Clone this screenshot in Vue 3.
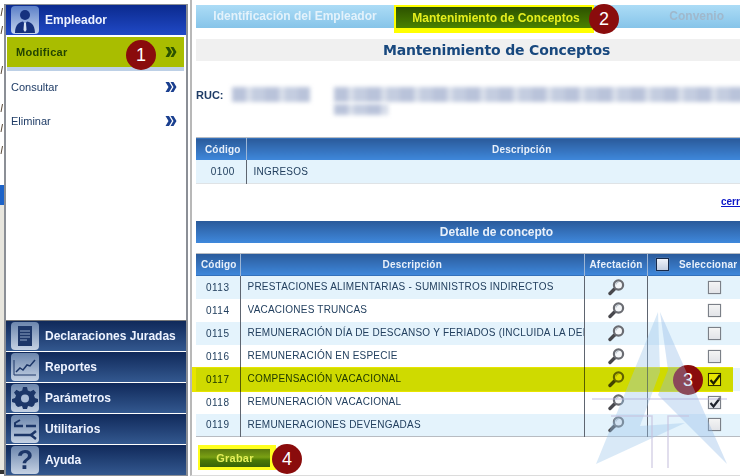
<script setup>
// Menu lateral y detalle de conceptos del empleador
const opciones = [
  { id: 'mod', texto: 'Modificar', activa: true },
  { id: 'con', texto: 'Consultar' },
  { id: 'eli', texto: 'Eliminar' },
]

const secciones = [
  { id: 'dec', texto: 'Declaraciones Juradas' },
  { id: 'rep', texto: 'Reportes' },
  { id: 'par', texto: 'Parámetros' },
  { id: 'uti', texto: 'Utilitarios' },
  { id: 'ayu', texto: 'Ayuda' },
]

const conceptos = [
  { codigo: '0113', desc: 'PRESTACIONES ALIMENTARIAS - SUMINISTROS INDIRECTOS' },
  { codigo: '0114', desc: 'VACACIONES TRUNCAS' },
  { codigo: '0115', desc: 'REMUNERACIÓN DÍA DE DESCANSO Y FERIADOS (INCLUIDA LA DEL 1° DE MAYO)' },
  { codigo: '0116', desc: 'REMUNERACIÓN EN ESPECIE' },
  { codigo: '0117', desc: 'COMPENSACIÓN VACACIONAL', marcado: true, amarilla: true },
  { codigo: '0118', desc: 'REMUNERACIÓN VACACIONAL', marcado: true },
  { codigo: '0119', desc: 'REMUNERACIONES DEVENGADAS' },
]

// restos de la ventana de atras
const restos = [12, 30, 70, 108, 128, 150]
</script>

<template>
  <div class="pagina">
    <svg class="resto-izq" viewBox="0 0 4 476" width="4" height="476">
      <path v-for="y in restos" :key="y" :d="`M2.500 ${y - 4} L1 ${y + 4}`" stroke="#5a4a3a" stroke-width="1" />
      <rect x="0" y="185" width="4" height="20" fill="#1d63c8" />
      <rect x="0" y="205" width="4" height="265" fill="#e8e6de" />
      <rect x="0" y="470" width="4" height="4" fill="#333" />
    </svg>

    <aside class="lateral">
      <div class="cab-menu">
        <span class="mosaico azul">
          <svg viewBox="0 0 28 28" width="28" height="28">
            <circle cx="14" cy="9" r="5" fill="#16317e" />
            <path d="M4 27 C4 18 9 16 12 15.500 L14 18 L16 15.500 C19 16 24 18 24 27 Z" fill="#16317e" />
            <path d="M13 17 H15 L15.500 24 L14 26 L12.500 24 Z" fill="#d7e2f2" />
          </svg>
        </span>
        Empleador
      </div>

      <div class="opciones">
        <div v-for="o in opciones" :key="o.id" class="opcion" :class="{ activa: o.activa }">
          <span>{{ o.texto }}</span>
          <svg viewBox="0 0 12 12" width="12" height="12">
            <path d="M0.500 1 H4 L7 6 L4 11 H0.500 L3.500 6 Z M5.500 1 H8.500 L11.500 6 L8.500 11 H5.500 L8.500 6 Z" />
          </svg>
        </div>
      </div>

      <div v-for="s in secciones" :key="s.id" class="seccion">
        <span class="mosaico">
          <svg v-if="s.id === 'dec'" viewBox="0 0 28 28" width="28" height="28">
            <rect x="7" y="4" width="14" height="20" fill="#1c3668" />
            <path d="M9 9 H19 M9 12 H19 M9 15 H19 M9 18 H16" stroke="#8fa5c6" stroke-width="1.200" />
          </svg>
          <svg v-else-if="s.id === 'rep'" viewBox="0 0 28 28" width="28" height="28">
            <path d="M3 7 V22 H25" fill="none" stroke="#1c3668" />
            <path d="M5 19 L9 15 L12 17 L16 12 L19 13 L24 7" fill="none" stroke="#1c3668" stroke-width="1.500" />
          </svg>
          <svg v-else-if="s.id === 'par'" viewBox="0 0 28 28" width="28" height="28">
            <path d="M12 4 H16 L16.800 7.500 L19.500 8.600 L22.500 6.800 L25 9.500 L23 12.500 L24 15 L27 16 V19 L24 20 L23 22.500 L21 24 L17 23 L16 26 H12 L11 23 L7 24 L5 22.500 L4 20 L1 19 V16 L4 15 L5 12.500 L3 9.500 L5.500 6.800 L8.500 8.600 L11.200 7.500 Z" fill="#1c3668" transform="translate(0 -1)" />
            <circle cx="14" cy="14.500" r="4" fill="#a9bbd6" />
          </svg>
          <svg v-else-if="s.id === 'uti'" viewBox="0 0 28 28" width="28" height="28">
            <path d="M3 11 H12 M15 11 H25 M3 20 H20" stroke="#1c3668" stroke-width="2.400" />
            <path d="M9 5 L4 8 V11" fill="none" stroke="#1c3668" stroke-width="2" />
            <path d="M20 20 L25 16 M20 20 L25 24" stroke="#1c3668" stroke-width="2.500" />
          </svg>
          <span v-else class="interroga">?</span>
        </span>
        {{ s.texto }}
      </div>
    </aside>

    <main class="contenido">
      <nav class="pestanas">
        <div class="pestana primera">Identificación del Empleador</div>
        <div class="pestana actual"><span>Mantenimiento de Conceptos</span></div>
        <div class="pestana apagada">Convenio</div>
      </nav>

      <h1 class="titulo">Mantenimiento de Conceptos</h1>

      <div class="ruc">
        <strong>RUC:</strong>
        <div class="borroso corto"></div>
        <div class="bloque-nombre">
          <div class="borroso largo"></div>
          <div class="borroso linea2"></div>
        </div>
      </div>

      <table class="tabla tabla-cab">
        <thead>
          <tr>
            <th class="col-a">Código</th>
            <th>Descripción</th>
          </tr>
        </thead>
        <tbody>
          <tr class="par">
            <td class="centro cod-a">0100</td>
            <td>INGRESOS</td>
          </tr>
        </tbody>
      </table>

      <div class="cerrar"><a href="#">cerrar</a></div>

      <div class="banda">Detalle de concepto</div>

      <table class="tabla tabla-det">
        <thead>
          <tr>
            <th class="col-cod">Código</th>
            <th class="col-desc">Descripción</th>
            <th class="col-afe">Afectación</th>
            <th class="col-sel">
              <div class="sel-cab"><span class="caja cab"></span>Seleccionar</div>
            </th>
          </tr>
        </thead>
        <tbody>
          <tr v-for="(c, i) in conceptos" :key="c.codigo" :class="{ par: i % 2 === 0 }">
            <td class="centro">{{ c.codigo }}</td>
            <td class="desc"><div class="recorte">{{ c.desc }}</div></td>
            <td class="centro">
              <svg class="lupa" viewBox="0 0 17 17" width="17" height="17">
                <path d="M6.500 10 L2 14.500" stroke="#48484d" stroke-width="3.400" stroke-linecap="round" />
                <circle cx="10.500" cy="6" r="4.600" fill="#f4f6f8" stroke="#6a6c72" stroke-width="2.200" />
                <path d="M7.800 5.500 A3 3 0 0 1 10.500 3.200" fill="none" stroke="#bcc5cc" stroke-width="1.200" />
              </svg>
            </td>
            <td class="centro">
              <span class="caja" :class="{ amarilla: c.amarilla }">
                <svg v-if="c.marcado" viewBox="0 0 14 14" width="14" height="14">
                  <path d="M2.500 7 L5.500 10.500 L12 2" fill="none" stroke="#20242c" stroke-width="2.200" />
                </svg>
              </span>
            </td>
          </tr>
        </tbody>
      </table>

      <div class="acciones">
        <button class="grabar" type="button">Grabar</button>
      </div>
    </main>

    <!-- Anotaciones encima de la captura -->
    <div class="resalte"></div>
    <span class="num uno">1</span>
    <span class="num dos">2</span>
    <span class="num tres">3</span>
    <span class="num cuatro">4</span>

    <svg class="marca" viewBox="0 0 740 476" width="740" height="476">
      <polygon points="658,312 596,464 685,423 640,426 660,372" fill="#9cc4ea" opacity="0.38" />
      <polygon points="660,312 727,464 658,395 668,370" fill="#8cb8e6" opacity="0.36" />
      <path d="M592 399 H727" stroke="#b9b6dc" stroke-width="1.500" opacity="0.6" />
      <path d="M611 416 H652 V468 M689 416 H668 V468" fill="none" stroke="#c4c0dc" stroke-width="1.500" opacity="0.7" />
    </svg>
  </div>
</template>

<style scoped>
.pagina {
  position: relative;
  display: flex;
  width: 740px;
  height: 476px;
  overflow: hidden;
  background: #fff;
  font-family: "Liberation Sans", Arial, sans-serif;
}

.resto-izq {
  flex: none;
  display: block;
}

/* Menu lateral */
.lateral {
  width: 184px;
  flex: none;
  display: flex;
  flex-direction: column;
  height: 472px;
  margin-top: 4px;
  border: 1px solid #8b8f96;
  border-left-width: 2px;
  border-right-width: 2px;
  box-sizing: border-box;
}

.cab-menu {
  display: flex;
  align-items: center;
  gap: 6px;
  height: 30px;
  padding-left: 5px;
  flex: none;
  background: linear-gradient(#0b2a8e, #2049c6);
  color: #eef3ff;
  font-size: 12px;
  font-weight: bold;
  border-bottom: 1px solid #fff;
}

.mosaico {
  width: 28px;
  height: 28px;
  flex: none;
  display: flex;
  align-items: center;
  justify-content: center;
  border-radius: 4px;
  background: linear-gradient(#6c86ad, #c5d2e4);
  overflow: hidden;
}

.mosaico.azul {
  background: linear-gradient(#5b7fc8, #c6d5ee);
}

.interroga {
  font: bold 27px "Liberation Sans", sans-serif;
  color: #1c3668;
}

.opciones {
  flex: 1;
  background: #fff;
}

.opcion {
  display: flex;
  align-items: center;
  justify-content: space-between;
  height: 34px;
  padding: 0 9px 0 5px;
  font-size: 11px;
  color: #1f3c66;
}

.opcion svg {
  fill: #1a3f8f;
}

.opcion.activa {
  height: 30px;
  margin: 1px 2px 3px 1px;
  padding: 0 7px 0 9px;
  background: #a9bd00;
  box-shadow: 0 4px #bdd0e6;
  font-weight: bold;
  color: #234400;
}

.opcion.activa span {
  letter-spacing: 0.3px;
}

.opcion.activa svg {
  fill: #2a5200;
}

.seccion {
  display: flex;
  align-items: center;
  gap: 6px;
  height: 30px;
  padding-left: 5px;
  flex: none;
  background: linear-gradient(#10295a, #33588f);
  border-top: 1px solid #fff;
  color: #eef3ff;
  font-size: 12px;
  font-weight: bold;
}

.seccion:nth-child(3) {
  border-top: 1px solid #777;
}

/* Contenido: mas ancho que la ventana, se corta a la derecha */
.contenido {
  flex: none;
  width: 607px;
  height: 476px;
  box-sizing: border-box;
  margin-left: 2px;
  padding: 5px 0 0 4px;
  border-left: 2px solid #b8b8b8;
  border-bottom: 1px solid #dcdcdc;
}

.pestanas {
  display: flex;
  height: 23px;
  background: linear-gradient(#acdcf6, #86c4e9);
}

.pestana {
  display: flex;
  align-items: center;
  justify-content: center;
  font-size: 12px;
  font-weight: bold;
  color: #e3f2fb;
  margin-top: -2px;
}

.pestana.primera {
  width: 198px;
  flex: none;
}

.pestana.actual {
  width: 200px;
  flex: none;
  height: 28px;
  margin-top: 0;
  padding-left: 4px;
  box-sizing: border-box;
  border: 2px solid #ffff00;
  border-bottom-width: 5px;
  background: linear-gradient(#2d5200, #4a8200);
  color: #e6ee1c;
}

.pestana.apagada {
  width: 146px;
  flex: none;
  color: #9fb8cc;
  padding-left: 10px;
  box-sizing: border-box;
  justify-content: flex-end;
  padding-right: 16px;
}

.titulo {
  margin: 11px 0 0;
  height: 22px;
  background: #f0f0f0;
  font: bold 14px/22px "DejaVu Sans", Verdana, sans-serif;
  letter-spacing: -0.15px;
  color: #18487e;
  text-align: center;
}

.ruc {
  display: flex;
  align-items: flex-start;
  margin-top: 26px;
  height: 50px;
  font-size: 11px;
  color: #1f3c66;
}

.ruc strong {
  width: 36px;
  margin-top: 2px;
  flex: none;
}

.borroso {
  height: 15px;
  background: repeating-linear-gradient(90deg, #b9c3da 0 14px, #d8deea 14px 20px, #c4cde0 20px 33px);
  filter: blur(2px);
}

.corto {
  width: 78px;
  flex: none;
}

.bloque-nombre {
  flex: 1;
  margin-left: 24px;
  min-width: 0;
}

.largo {
  width: 410px;
}

.linea2 {
  width: 54px;
  height: 11px;
  margin-top: 2px;
}

.tabla {
  table-layout: fixed;
  border-collapse: collapse;
  font-size: 10px;
  color: #23405f;
}

.tabla th {
  height: 22px;
  padding: 0;
  background: linear-gradient(#2a5a9a, #3f88dc);
  color: #e8f0fa;
  font-size: 10px;
  font-weight: bold;
  letter-spacing: 0.2px;
  border-top: 1px solid #b8bcc2;
  border-left: 1px solid #9db6d6;
}

.tabla th:first-child {
  border-left: 0;
}

.tabla td {
  height: 23px;
  padding: 0;
  box-sizing: border-box;
  border-left: 1px solid #5e6570;
  background: #fff;
}

.tabla td:first-child {
  border-left: 0;
}

.tabla .par td {
  background: #e4f3fc;
}

.tabla td:nth-child(2) {
  padding-left: 7px;
  letter-spacing: 0.22px;
}

.centro {
  text-align: center;
  letter-spacing: 0.5px;
}

.tabla-cab {
  width: 100%;
  border-bottom: 1px solid #dfe3e6;
}

.tabla-cab .col-a {
  width: 50px;
  padding-left: 4px;
  box-sizing: border-box;
}

.tabla-cab .cod-a {
  padding-left: 4px;
}

.cerrar {
  height: 37px;
  padding: 12px 0 0 525px;
  box-sizing: border-box;
  font-size: 10px;
  font-weight: bold;
}

.cerrar a {
  color: #0b16c8;
}

.banda {
  height: 22px;
  background: linear-gradient(#2a5a9a, #3f88dc);
  color: #e8f0fa;
  font: bold 12px/22px "Liberation Sans", sans-serif;
  text-align: center;
}

.tabla-det {
  width: 584px;
  margin-top: 10px;
  border-bottom: 1px solid #b8bcc2;
}

.tabla-det th {
  height: 22px;
}

.col-cod {
  width: 44px;
  padding-left: 2px !important;
  box-sizing: border-box;
}

.col-afe {
  width: 62px;
}

.col-sel {
  width: 132px;
}

.recorte {
  white-space: nowrap;
  overflow: hidden;
  line-height: 16px;
}

.sel-cab {
  display: flex;
  align-items: center;
  gap: 10px;
  padding-left: 8px;
}

.caja {
  display: inline-block;
  width: 13px;
  height: 13px;
  box-sizing: border-box;
  border: 1px solid #7b8088;
  background: linear-gradient(#f4f4f4, #e2e4e8);
  vertical-align: middle;
  box-shadow: 0 0 1px #aaa;
}

.caja svg {
  display: block;
  margin: -1px;
}

.caja.cab {
  border: 1px solid #16294a;
  background: linear-gradient(#f0f3fa, #c4cfe2);
  flex: none;
}

.caja.amarilla {
  background: #ffff30;
  border-color: #333;
}

.lupa {
  display: block;
  margin: 0 auto;
}

.acciones {
  margin-top: 8px;
  margin-left: 2px;
}

.grabar {
  display: block;
  width: 78px;
  height: 25px;
  margin: 0;
  padding: 0;
  box-sizing: border-box;
  border: solid #ffff1e;
  border-width: 4px 6px 3px 2px;
  background: linear-gradient(#5c7a10, #7aa014 45%, #4a7a04 62%, #36620a);
  background-clip: padding-box;
  color: #e6f05a;
  font: bold 11px "Liberation Sans", sans-serif;
  letter-spacing: 0.2px;
}

/* Elementos superpuestos */
.resalte {
  position: absolute;
  left: 192px;
  top: 367px;
  width: 541px;
  height: 25px;
  background: #e8e500;
  mix-blend-mode: multiply;
}

.marca {
  position: absolute;
  left: 0;
  top: 0;
  pointer-events: none;
}

.num {
  position: absolute;
  width: 30px;
  height: 30px;
  border-radius: 50%;
  background: #8a0c0c;
  color: #fff;
  font: 18px/30px "Liberation Sans", sans-serif;
  text-align: center;
}

.uno { left: 126px; top: 40px; }
.dos { left: 589px; top: 4px; }
.tres { left: 673px; top: 365px; }
.cuatro { left: 272px; top: 444px; }
</style>
